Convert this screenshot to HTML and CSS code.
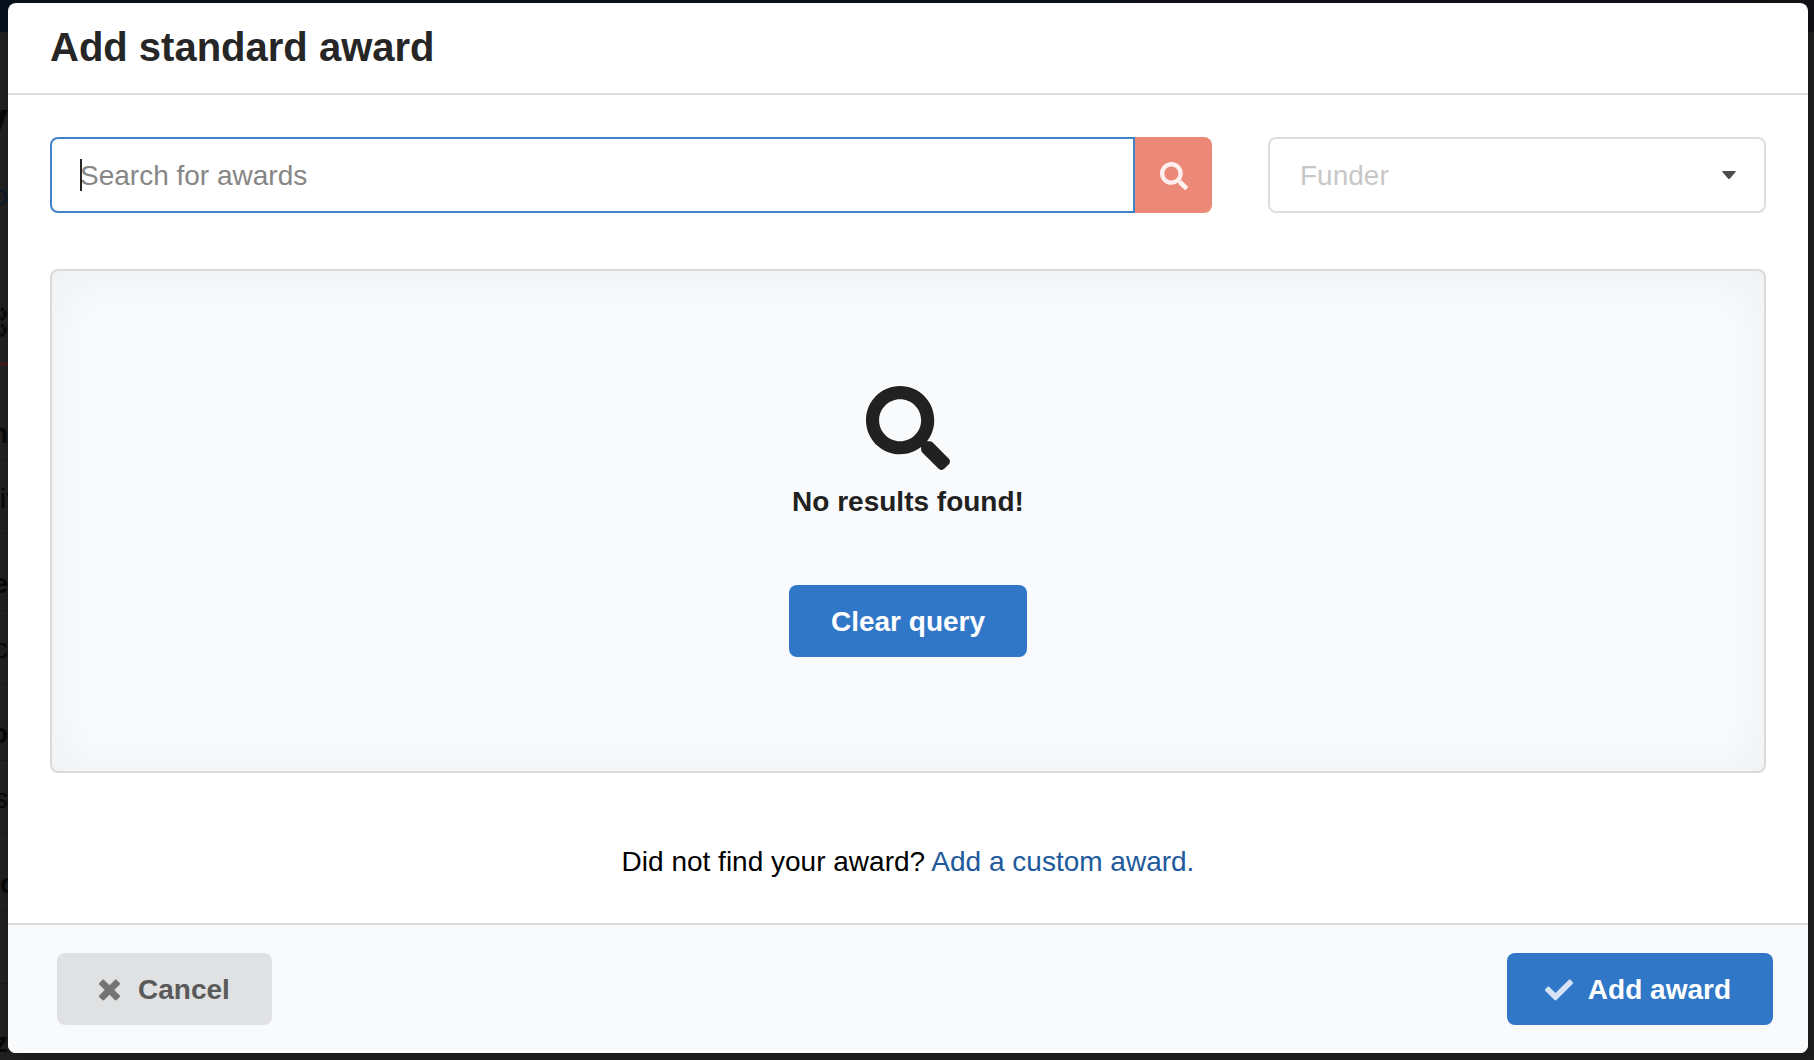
FILE: index.html
```html
<!DOCTYPE html>
<html lang="en">
<head>
<meta charset="utf-8">
<title>Add standard award</title>
<link rel="stylesheet" href="styles.css">
</head>
<body>
<div class="backdrop" aria-hidden="true">
  <div class="backdrop-header"></div>
  <div class="backdrop-column">
    <div class="backdrop-title">y</div>
    <div class="backdrop-link">o</div>
    <div class="backdrop-tools">
      <svg class="gear" viewBox="0 0 16 16"><circle cx="8" cy="8" r="5"/></svg>
      <svg class="gear" viewBox="0 0 16 16"><circle cx="8" cy="8" r="5"/></svg>
    </div>
    <div class="backdrop-label">n</div>
    <div class="backdrop-value from-start">iv</div>
    <div class="backdrop-label">e</div>
    <div class="backdrop-value">c</div>
    <div class="backdrop-label">o</div>
    <div class="backdrop-value">s</div>
    <div class="backdrop-label from-start">c</div>
    <div class="backdrop-value"></div>
    <div class="backdrop-label">z</div>
  </div>
</div>

<main class="modal" role="dialog" aria-labelledby="modal-title">
  <header class="modal-header">
    <h1 class="modal-title" id="modal-title">Add standard award</h1>
  </header>

  <div class="modal-content">
    <form class="filters">
      <div class="search">
        <input class="search-input" type="text" placeholder="Search for awards" aria-label="Search for awards">
        <span class="search-cursor"></span>
        <button class="search-button" type="button" aria-label="Search">
          <svg class="icon" viewBox="0 0 512 512"><path d="M505 442.7L405.3 343c-4.5-4.5-10.6-7-17-7H372c27.6-35.3 44-79.7 44-128C416 93.1 322.9 0 208 0S0 93.1 0 208s93.1 208 208 208c48.3 0 92.7-16.4 128-44v16.3c0 6.4 2.5 12.5 7 17l99.7 99.7c9.4 9.4 24.6 9.4 33.9 0l28.3-28.3c9.4-9.4 9.4-24.6.1-34zM208 336c-70.7 0-128-57.2-128-128 0-70.7 57.2-128 128-128 70.7 0 128 57.2 128 128 0 70.7-57.2 128-128 128z"/></svg>
        </button>
      </div>
      <div class="funder">
        <select class="funder-select" aria-label="Funder">
          <option>Funder</option>
        </select>
        <svg class="funder-arrow" viewBox="0 0 14 8"><path d="M1 0h12q1.500 0 .6 1L8 7.500q-1 1-2 0L.4 1Q-.5 0 1 0z"/></svg>
      </div>
    </form>

    <section class="empty">
      <div class="empty-heading">
        <svg class="icon-large" viewBox="0 0 512 512"><path d="M505 442.7L405.3 343c-4.5-4.5-10.6-7-17-7H372c27.6-35.3 44-79.7 44-128C416 93.1 322.9 0 208 0S0 93.1 0 208s93.1 208 208 208c48.3 0 92.7-16.4 128-44v16.3c0 6.4 2.5 12.5 7 17l99.7 99.7c9.4 9.4 24.6 9.4 33.9 0l28.3-28.3c9.4-9.4 9.4-24.6.1-34zM208 336c-70.7 0-128-57.2-128-128 0-70.7 57.2-128 128-128 70.7 0 128 57.2 128 128 0 70.7-57.2 128-128 128z"/></svg>
        <h2 class="empty-title">No results found!</h2>
      </div>
      <button class="button primary" type="button">Clear query</button>
    </section>

    <p class="custom">Did not find your award? <a class="custom-link" href="#">Add a custom award.</a></p>
  </div>

  <footer class="modal-actions">
    <button class="button" type="button">
      <svg class="icon icon-times" viewBox="0 0 384 512"><path d="M323.1 441l53.9-53.9c9.4-9.4 9.4-24.5 0-33.9L279.8 256l97.2-97.2c9.4-9.4 9.4-24.5 0-33.9L323.1 71c-9.4-9.4-24.5-9.4-33.9 0L192 168.2 94.8 71c-9.4-9.4-24.5-9.4-33.9 0L7 124.9c-9.4 9.4-9.4 24.5 0 33.9l97.2 97.2L7 353.2c-9.4 9.4-9.4 24.5 0 33.9L60.9 441c9.4 9.4 24.5 9.4 33.9 0l97.2-97.2 97.2 97.2c9.3 9.3 24.5 9.3 33.9 0z"/></svg>
      Cancel
    </button>
    <button class="button primary confirm" type="button">
      <svg class="icon" viewBox="0 0 512 512"><path d="M173.898 439.404l-166.4-166.4c-9.997-9.997-9.997-26.206 0-36.204l36.203-36.204c9.997-9.998 26.207-9.998 36.204 0L192 312.690 432.095 72.596c9.997-9.997 26.207-9.997 36.204 0l36.203 36.204c9.997 9.997 9.997 26.206 0 36.204l-294.400 294.401c-9.998 9.997-26.207 9.997-36.204-.001z"/></svg>
      Add award
    </button>
  </footer>
</main>
</body>
</html>
```
FILE: styles.css
```css
* {
  box-sizing: border-box;
}

body {
  margin: 0;
  min-height: 100vh;
  padding: 3px 6px 7px 8px;
  background: #212121;
  color: #000;
  font-family: "Liberation Sans", Arial, sans-serif;
  font-size: 28px;
  line-height: 40px;
}

/* Dimmed page behind the dialog */
.backdrop {
  position: absolute;
  inset: 0;
  overflow: hidden;
  color: #080808;
}

.backdrop-header {
  height: 32px;
  background: linear-gradient(90deg, #07111d, #111116);
}

.backdrop-column {
  width: 8px;
}

.backdrop-column > div {
  display: flex;
  justify-content: flex-end;
  align-items: flex-end;
  overflow: hidden;
}

.backdrop-column > .from-start {
  justify-content: flex-start;
}

.backdrop-title {
  height: 116px;
  padding-bottom: 8px;
  font-size: 48px;
  font-weight: 700;
}

.backdrop-link {
  height: 68px;
  color: #0b1a2b;
}

.backdrop-column .backdrop-tools {
  height: 150px;
  padding-bottom: 24px;
  flex-direction: column;
  border-bottom: 4px solid #3d1a1a;
}

.gear {
  flex: none;
  width: 16px;
  height: 16px;
  fill: none;
  stroke: #080808;
  stroke-width: 4;
  stroke-dasharray: 3 1;
}

.backdrop-label {
  height: 77px;
  padding-bottom: 6px;
  border-bottom: 1px solid #1a1a1a;
  font-weight: 700;
}

.backdrop-tools + .backdrop-label {
  height: 95px;
}

.backdrop-label:last-child {
  height: 86px;
}

.backdrop-value {
  height: 73px;
  padding-bottom: 14px;
  border-bottom: 1px solid #1a1a1a;
}

/* Dialog */
.modal {
  position: relative;
  min-height: calc(100vh - 10px);
  display: flex;
  flex-direction: column;
  overflow: hidden;
  border-radius: 8px;
  background: #fff;
  box-shadow: 2px 6px 14px rgba(0, 0, 0, .3);
}

.modal-header {
  padding: 20px 42px 22px;
  border-bottom: 2px solid #dededf;
}

.modal-title {
  margin: 0;
  color: #262626;
  font-size: 40px;
  line-height: 48px;
}

.modal-content {
  flex: 1;
  display: flex;
  flex-direction: column;
  padding: 42px 42px 41px;
}

.filters {
  display: grid;
  grid-template-columns: 7fr 3fr;
  gap: 56px;
  margin-bottom: 56px;
}

.search {
  position: relative;
  display: flex;
  height: 76px;
}

.search-input {
  flex: 1;
  min-width: 0;
  padding: 2px 28px 0;
  border: 2px solid #4183c8;
  border-radius: 8px 0 0 8px;
  outline: 0;
  background: #fff;
  color: #262626;
  font: inherit;
}

.search-input::placeholder {
  color: #868686;
  opacity: 1;
}

.search-cursor {
  position: absolute;
  left: 30px;
  top: 22px;
  width: 2px;
  height: 32px;
  background: #262626;
}

.search-button {
  width: 77px;
  display: flex;
  align-items: center;
  justify-content: center;
  padding: 2px 0 0;
  border: 0;
  border-radius: 0 8px 8px 0;
  background: #ec8878;
  color: #fdf0ee;
}

.icon {
  width: 28px;
  height: 28px;
  fill: currentColor;
}

.icon-times {
  width: 21px;
}

.funder {
  position: relative;
}

.funder-select {
  width: 100%;
  height: 76px;
  padding: 2px 30px 0;
  appearance: none;
  border: 2px solid #dededf;
  border-radius: 8px;
  background: #fff;
  color: #c7c7c7;
  font: inherit;
}

.funder-arrow {
  position: absolute;
  right: 30px;
  top: 34px;
  width: 14px;
  height: 8px;
  fill: #4d4d4d;
  pointer-events: none;
}

.empty {
  min-height: 504px;
  display: flex;
  flex-direction: column;
  align-items: center;
  justify-content: center;
  gap: 63px;
  padding-top: 1px;
  border: 2px solid #d9dadb;
  border-radius: 8px;
  background: #f9fafc;
  box-shadow: inset 0 4px 50px rgba(34, 36, 38, .05);
}

.empty-heading {
  display: flex;
  flex-direction: column;
  align-items: center;
  gap: 12px;
  color: #212121;
}

.icon-large {
  width: 84px;
  height: 84px;
  fill: currentColor;
}

.empty-title {
  margin: 0;
  font-size: 28px;
  line-height: 40px;
}

.custom {
  margin: auto 0 0;
  text-align: center;
}

.custom-link {
  color: #215a9c;
  text-decoration: none;
}

.modal-actions {
  display: flex;
  justify-content: space-between;
  padding: 28px 35px 28px 49px;
  border-top: 2px solid #d9dadb;
  background: #f9fafc;
}

.button {
  display: flex;
  align-items: center;
  gap: 18px;
  padding: 17px 42px 15px;
  border: 0;
  border-radius: 8px;
  background: #e0e1e2;
  color: #5a5a5a;
  font: inherit;
  font-weight: 700;
}

.button .icon {
  opacity: .8;
}

.primary {
  background: #3077c8;
  color: #fff;
}

.confirm {
  gap: 15px;
  padding-left: 38px;
}
```
